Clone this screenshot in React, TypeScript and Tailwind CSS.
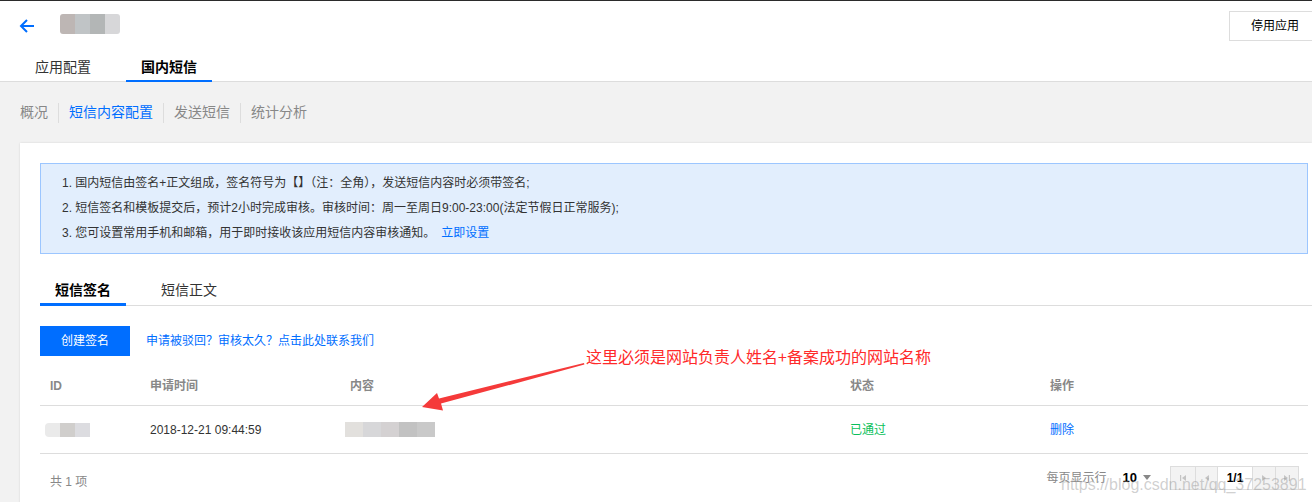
import React from "react";

// blurred placeholder blocks (the screenshot has pixelated names here)
function Blur({ colors, className }: { colors: string[]; className: string }) {
  return (
    <div className={`flex overflow-hidden ${className}`}>
      {colors.map((c, i) => (
        <div key={i} className="h-full flex-1" style={{ backgroundColor: c }} />
      ))}
    </div>
  );
}

const subNav = ["概况", "短信内容配置", "发送短信", "统计分析"];

const infoLines = [
  "1. 国内短信由签名+正文组成，签名符号为【】（注：全角），发送短信内容时必须带签名;",
  "2. 短信签名和模板提交后，预计2小时完成审核。审核时间：周一至周日9:00-23:00(法定节假日正常服务);",
];

function PageIcon({ kind }: { kind: "first" | "prev" | "next" | "last" }) {
  return (
    <svg width="10" height="10" viewBox="0 0 10 10" className="text-[#c4c4c4]">
      {kind === "first" && (
        <>
          <rect x="2" y="2" width="1.2" height="6" fill="currentColor" />
          <path d="M8 2 L4 5 L8 8 Z" fill="currentColor" />
        </>
      )}
      {kind === "prev" && <path d="M7 2 L3 5 L7 8 Z" fill="currentColor" />}
      {kind === "next" && <path d="M3 2 L7 5 L3 8 Z" fill="currentColor" />}
      {kind === "last" && (
        <>
          <path d="M2 2 L6 5 L2 8 Z" fill="currentColor" />
          <rect x="6.8" y="2" width="1.2" height="6" fill="currentColor" />
        </>
      )}
    </svg>
  );
}

export default function App() {
  return (
    <div className="relative w-[1312px] h-[502px] overflow-hidden bg-[#f2f2f2] font-['Liberation_Sans','Noto_Sans_CJK_SC',sans-serif] text-[#333]">
      <div className="h-px bg-[#2b2b2b]" />

      {/* header */}
      <div className="bg-white border-b border-[#dddddd]">
        <div className="flex h-[50px] items-center justify-between pl-[19px]">
          <div className="flex items-center">
            <svg width="16" height="16" viewBox="0 0 16 16" fill="none" className="text-[#006eff]">
              <path d="M8 2 L2 8 L8 14 M2 8 H15" stroke="currentColor" strokeWidth="2" />
            </svg>
            <Blur
              colors={["#bdb6b4", "#c0c4c6", "#b3b6b6", "#d7d7d9"]}
              className="ml-[25px] mb-[4px] h-[20px] w-[60px] rounded-[3px]"
            />
          </div>
          <button className="h-[30px] w-[83px] border border-r-0 border-[#dddddd] bg-white pl-[21px] text-left text-[12px] text-[#000]">
            停用应用
          </button>
        </div>
        <div className="flex h-[30px] gap-[20px] pl-[20px]">
          <div className="px-[15px] pt-[6px] text-[14px] leading-[20px] text-[#333]">应用配置</div>
          <div className="-mb-px border-b-2 border-[#006eff] px-[15px] pt-[6px] text-[14px] font-bold leading-[20px] text-[#000]">
            国内短信
          </div>
        </div>
      </div>

      {/* sub nav */}
      <div className="flex h-[61px] items-center pl-[20px] text-[14px]">
        {subNav.map((item, i) => (
          <div key={item} className="flex items-center">
            {i > 0 && <div className="mx-[10px] h-[20px] w-px bg-[#dddddd]" />}
            <span className={i === 1 ? "text-[#006eff]" : "text-[#888]"}>{item}</span>
          </div>
        ))}
      </div>

      {/* card */}
      <div className="ml-[20px] h-[400px] bg-white pl-[20px] pr-[4px] pt-[20px] shadow-[0_0_2px_rgba(0,0,0,0.12)]">
        <div className="border border-[#9cc6ff] bg-[#e2eefd] py-[7px] pl-[21px] text-[12px] leading-[25px] text-[#333]">
          {infoLines.map((l) => (
            <div key={l}>{l}</div>
          ))}
          <div>
            3. 您可设置常用手机和邮箱，用于即时接收该应用短信内容审核通知。
            <span className="ml-[6px] text-[#006eff]">立即设置</span>
          </div>
        </div>

        <div className="-mr-[4px] mt-[20px] flex gap-[20px] border-b border-[#dddddd]">
          <div className="-mb-px h-[32px] border-b-[3px] border-[#006eff] px-[15px] pt-[6px] text-[14px] font-bold leading-[20px] text-[#000]">
            短信签名
          </div>
          <div className="h-[31px] px-[15px] pt-[6px] text-[14px] leading-[20px] text-[#333]">短信正文</div>
        </div>

        <div className="mt-[20px] flex items-center">
          <button className="h-[30px] w-[90px] bg-[#006eff] text-[12px] text-white">创建签名</button>
          <span className="ml-[16px] text-[12px] text-[#006eff]">申请被驳回？审核太久？点击此处联系我们</span>
        </div>

        {/* table */}
        <div className="mt-[10px] text-[12px]">
          <div className="grid h-[40px] grid-cols-[100px_200px_500px_200px_1fr] items-center border-b border-[#dddddd] font-bold text-[#888]">
            <div className="pl-[10px]">ID</div>
            <div className="pl-[10px]">申请时间</div>
            <div className="pl-[10px]">内容</div>
            <div className="pl-[10px]">状态</div>
            <div className="pl-[10px]">操作</div>
          </div>
          <div className="grid h-[48px] grid-cols-[100px_200px_500px_200px_1fr] items-center border-b border-[#dddddd] text-[#333]">
            <div className="pl-[5px]">
              <Blur colors={["#eaeaea", "#d0cecc", "#dcdce0"]} className="h-[14px] w-[45px] rounded-l-[4px]" />
            </div>
            <div className="pl-[10px]">2018-12-21 09:44:59</div>
            <div className="pl-[5px]">
              <Blur
                colors={["#e2e0dd", "#d7d7d9", "#d4d1d2", "#c2c2c2", "#c9c9c9"]}
                className="h-[15px] w-[90px]"
              />
            </div>
            <div className="pl-[10px] text-[#0abf5b]">已通过</div>
            <div className="pl-[10px] text-[#006eff]">删除</div>
          </div>

          <div className="mr-[9px] mt-[11px] flex items-center justify-between">
            <span className="mt-[8px] pl-[10px] text-[#888]">共 1 项</span>
            <div className="flex items-center">
              <span className="text-[#888]">每页显示行</span>
              <span className="ml-[16px] text-[13px] font-bold text-[#000]">10</span>
              <svg width="8" height="6" viewBox="0 0 8 6" className="ml-[6px] text-[#888]">
                <path d="M0 0 H8 L4 5 Z" fill="currentColor" />
              </svg>
              <div className="ml-[19px] flex h-[24px] border border-[#dddddd]">
                <div className="flex w-[24px] items-center justify-center bg-[#f3f3f3]">
                  <PageIcon kind="first" />
                </div>
                <div className="flex w-[22px] items-center justify-center border-l border-[#dddddd] bg-[#f3f3f3]">
                  <PageIcon kind="prev" />
                </div>
                <div className="flex w-[35px] items-center justify-center border-l border-[#dddddd] bg-white font-bold text-[#000]">
                  1/1
                </div>
                <div className="flex w-[23px] items-center justify-center border-l border-[#dddddd] bg-[#f3f3f3]">
                  <PageIcon kind="next" />
                </div>
                <div className="flex w-[23px] items-center justify-center border-l border-[#dddddd] bg-[#f3f3f3]">
                  <PageIcon kind="last" />
                </div>
              </div>
            </div>
          </div>
        </div>
      </div>

      {/* annotation overlay */}
      <div className="absolute left-[586px] top-[345px] text-[16px] leading-[22px] text-[#ff2a2a] font-['Noto_Sans_CJK_SC',sans-serif]">
        这里必须是网站负责人姓名+备案成功的网站名称
      </div>
      <svg className="pointer-events-none absolute left-0 top-0" width="1312" height="502">
        <polygon
          points="422,407 437,393 439,398.5 584,363 584.4,364.6 441,403.6 443,410.5"
          fill="#f53a3a"
        />
      </svg>

      {/* watermark */}
      <div className="pointer-events-none absolute left-[1061px] top-[475px] text-[16px] leading-[20px] text-[rgba(150,150,150,0.45)] font-['Liberation_Sans',sans-serif]">
        https://blog.csdn.net/qq_37253891
      </div>
    </div>
  );
}
